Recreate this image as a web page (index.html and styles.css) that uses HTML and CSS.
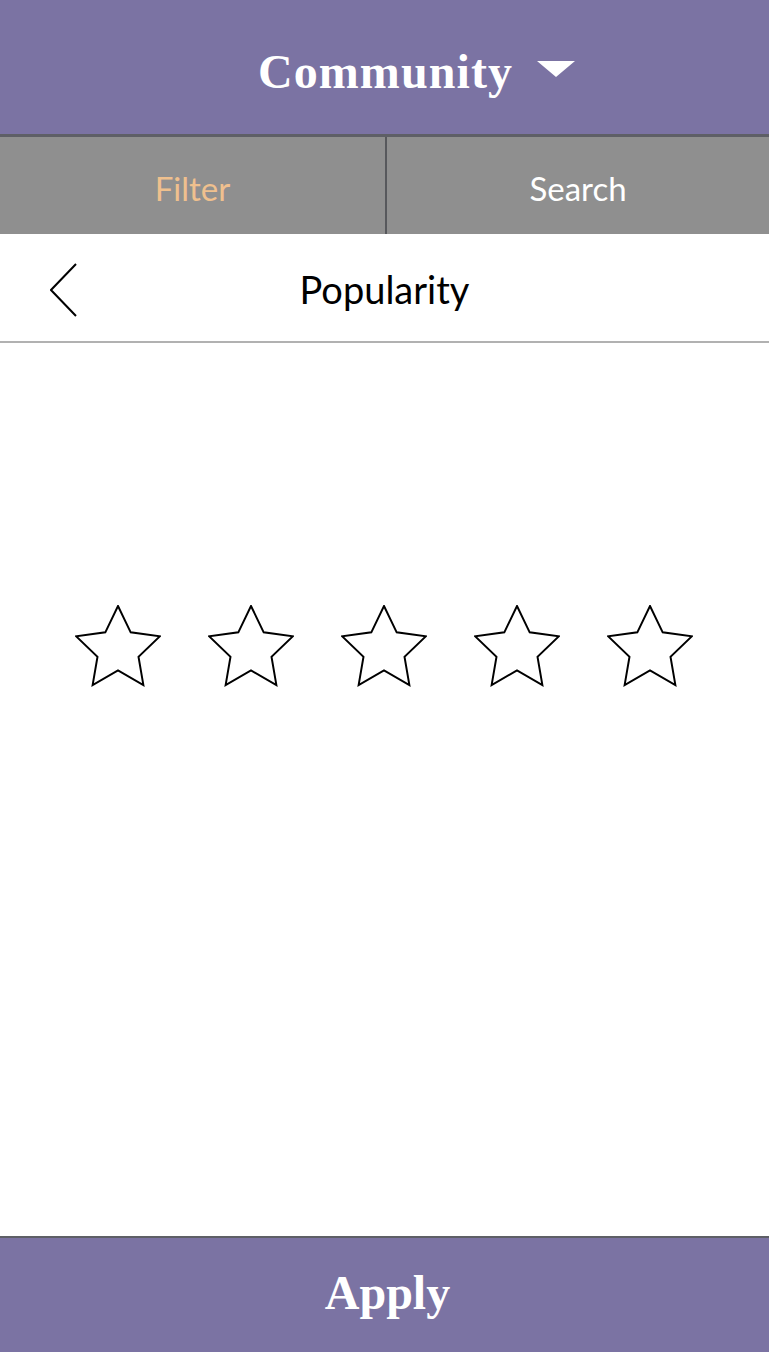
FILE: index.html
```html
<!DOCTYPE html>
<html>
<head>
<meta charset="utf-8">
<link rel="stylesheet" href="styles.css">
</head>
<body>
<div class="app">
  <header class="topbar">
    <span class="title">Community</span>
    <svg class="caret" width="38" height="16" viewBox="0 0 38 16"><polygon points="0,0 38,0 19,16" fill="#fff"/></svg>
  </header>
  <nav class="tabs">
    <div class="tab active">Filter</div>
    <div class="tab">Search</div>
  </nav>
  <div class="subhead">
    <svg class="back" width="30" height="56" viewBox="0 0 30 56"><polyline points="26,2 1,28 26,54" fill="none" stroke="#000" stroke-width="2"/></svg>
    <span class="subtitle">Popularity</span>
  </div>
  <main class="content">
    <div class="stars">
      <svg class="star" width="86" height="82" viewBox="-1 -1 88 84"><polygon points="43,0 56,27 86,31 64,52 69,81 43,66 17,81 22,52 0,31 30,27" fill="none" stroke="#000" stroke-width="2"/></svg>
      <svg class="star" width="86" height="82" viewBox="-1 -1 88 84"><polygon points="43,0 56,27 86,31 64,52 69,81 43,66 17,81 22,52 0,31 30,27" fill="none" stroke="#000" stroke-width="2"/></svg>
      <svg class="star" width="86" height="82" viewBox="-1 -1 88 84"><polygon points="43,0 56,27 86,31 64,52 69,81 43,66 17,81 22,52 0,31 30,27" fill="none" stroke="#000" stroke-width="2"/></svg>
      <svg class="star" width="86" height="82" viewBox="-1 -1 88 84"><polygon points="43,0 56,27 86,31 64,52 69,81 43,66 17,81 22,52 0,31 30,27" fill="none" stroke="#000" stroke-width="2"/></svg>
      <svg class="star" width="86" height="82" viewBox="-1 -1 88 84"><polygon points="43,0 56,27 86,31 64,52 69,81 43,66 17,81 22,52 0,31 30,27" fill="none" stroke="#000" stroke-width="2"/></svg>
    </div>
  </main>
  <footer class="applybar">Apply</footer>
</div>
</body>
</html>
```

FILE: styles.css
```css
* { box-sizing: border-box; }
html, body { margin: 0; padding: 0; background: #fff; }
.app {
  width: 769px;
  height: 1352px;
  display: flex;
  flex-direction: column;
  font-family: Lato, "Open Sans", sans-serif;
}
.topbar {
  height: 137px;
  flex: none;
  background: #7b73a3;
  border-bottom: 3px solid #5e5f66;
  display: flex;
  align-items: center;
  justify-content: center;
  padding-left: 64px;
  padding-top: 8px;
  gap: 24px;
}
.title {
  font-family: "Liberation Serif", "Times New Roman", serif;
  font-weight: bold;
  font-size: 48px;
  letter-spacing: 1.1px;
  color: #fff;
}
.caret { margin-top: -4px; }
.tabs {
  height: 97px;
  flex: none;
  display: flex;
  background: #8f8f8f;
}
.tab {
  flex: 1;
  display: flex;
  align-items: center;
  justify-content: center;
  font-size: 33px;
  color: #fff;
  padding-top: 4px;
}
.tab:first-child { border-right: 2px solid #57585c; flex: 0 0 387px; }
.tab.active { color: #efc08e; }
.subhead {
  height: 109px;
  flex: none;
  border-bottom: 2px solid #b1b1b1;
  display: flex;
  align-items: center;
  justify-content: center;
  position: relative;
}
.back { position: absolute; left: 50px; top: 28px; }
.subtitle { font-size: 38px; color: #000; margin-top: 2px; }
.content {
  flex: 1;
  padding-top: 262px;
}
.stars {
  display: flex;
  justify-content: center;
  gap: 47px;
  padding-right: 2px;
}
.applybar {
  height: 116px;
  flex: none;
  background: #7b73a3;
  border-top: 2px solid #5e5f66;
  display: flex;
  align-items: center;
  justify-content: center;
  font-family: "Liberation Serif", "Times New Roman", serif;
  font-weight: bold;
  font-size: 48px;
  color: #fff;
  padding-bottom: 5px;
  padding-left: 6px;
}
```
